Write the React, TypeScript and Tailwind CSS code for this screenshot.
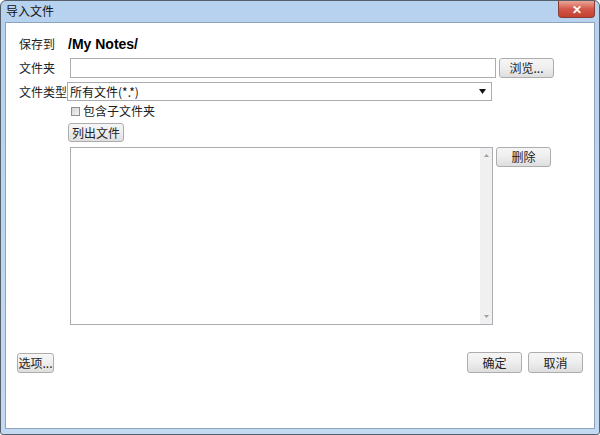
import React from 'react';

const font = { fontFamily: '"Noto Sans CJK SC", "Liberation Sans", sans-serif' };

function Btn({ label, className = '' }: { label: string; className?: string }) {
  return (
    <button
      className={`flex items-center justify-center rounded-[3px] border border-[#adadad] bg-gradient-to-b from-[#f6f6f6] via-[#eeeeee] to-[#dedede] text-[12px] leading-none text-[#222] ${className}`}
    >
      {label}
    </button>
  );
}

export default function App() {
  return (
    <div
      className="flex h-[435px] w-[600px] flex-col overflow-hidden rounded-t-[6px] rounded-b-[3px] border border-[#55606b] bg-gradient-to-b from-[#b7d2ef] to-[#c3daf2]"
      style={font}
    >
      {/* title bar */}
      <div className="flex h-[21px] shrink-0 items-start justify-between">
        <div className="pl-[5px] pt-[3px] text-[12px] leading-[14px] text-[#111]">导入文件</div>
        <div className="mr-[4px] flex h-[17px] w-[37px] items-center justify-center rounded-b-[4px] border border-t-0 border-[#8a3b32] bg-gradient-to-b from-[#e8a597] via-[#d3574a] to-[#c3412f] text-[12px] font-bold leading-none text-white">
          ✕
        </div>
      </div>

      {/* client area */}
      <div className="mx-[4px] mb-[5px] flex flex-1 flex-col border border-[#8da3bb] bg-white pl-[1px] pt-[12px] text-[12px] text-[#222]">
        <div className="flex h-[18px] items-center pl-[12px]">
          <span className="w-[49px]">保存到</span>
          <span className="text-[14px] font-bold text-black" style={{ fontFamily: '"Liberation Sans", sans-serif' }}>
            /My Notes/
          </span>
        </div>

        <div className="mt-[5px] flex h-[20px] items-center pl-[12px]">
          <span className="w-[51px]">文件夹</span>
          <div className="h-[20px] w-[426px] border border-[#abadb3] bg-white" />
          <Btn label="浏览..." className="ml-[3px] h-[20px] w-[55px]" />
        </div>

        <div className="mt-[4px] flex h-[19px] items-center pl-[12px]">
          <span className="w-[48px]">文件类型</span>
          <div className="flex h-[19px] w-[425px] items-center justify-between border border-[#abadb3] bg-white pl-[2px] pr-[5px]">
            <span className="text-[#111]">所有文件(*.*)</span>
            <svg width="7" height="5" viewBox="0 0 7 5">
              <path d="M0 0 H7 L3.5 5 Z" fill="#111" />
            </svg>
          </div>
        </div>

        <div className="mt-[3px] flex h-[14px] items-center pl-[64px]">
          <div className="h-[9px] w-[9px] border border-[#8f8f8f] bg-gradient-to-br from-[#d4d4d4] to-[#f4f4f4]" />
          <span className="ml-[3px]">包含子文件夹</span>
        </div>

        <div className="mt-[5px] flex pl-[61px]">
          <Btn label="列出文件" className="h-[19px] w-[56px]" />
        </div>

        <div className="mt-[5px] flex items-start pl-[63px]">
          <div className="flex h-[178px] w-[423px] justify-end border border-[#abadb3] bg-white">
            <div className="flex w-[12px] flex-col items-center justify-between bg-[#f0f0f0] py-[6px]">
              <svg width="5" height="3" viewBox="0 0 5 3">
                <path d="M0 3 L2.5 0 L5 3 Z" fill="#a0a0a0" />
              </svg>
              <svg width="5" height="3" viewBox="0 0 5 3">
                <path d="M0 0 H5 L2.5 3 Z" fill="#a0a0a0" />
              </svg>
            </div>
          </div>
          <Btn label="删除" className="ml-[3px] h-[20px] w-[55px]" />
        </div>

        <div className="mt-[27px] flex items-center justify-between pl-[10px] pr-[11px]">
          <Btn label="选项..." className="h-[20px] w-[37px]" />
          <div className="flex gap-[6px]">
            <Btn label="确定" className="h-[21px] w-[55px]" />
            <Btn label="取消" className="h-[21px] w-[55px]" />
          </div>
        </div>
      </div>
    </div>
  );
}
